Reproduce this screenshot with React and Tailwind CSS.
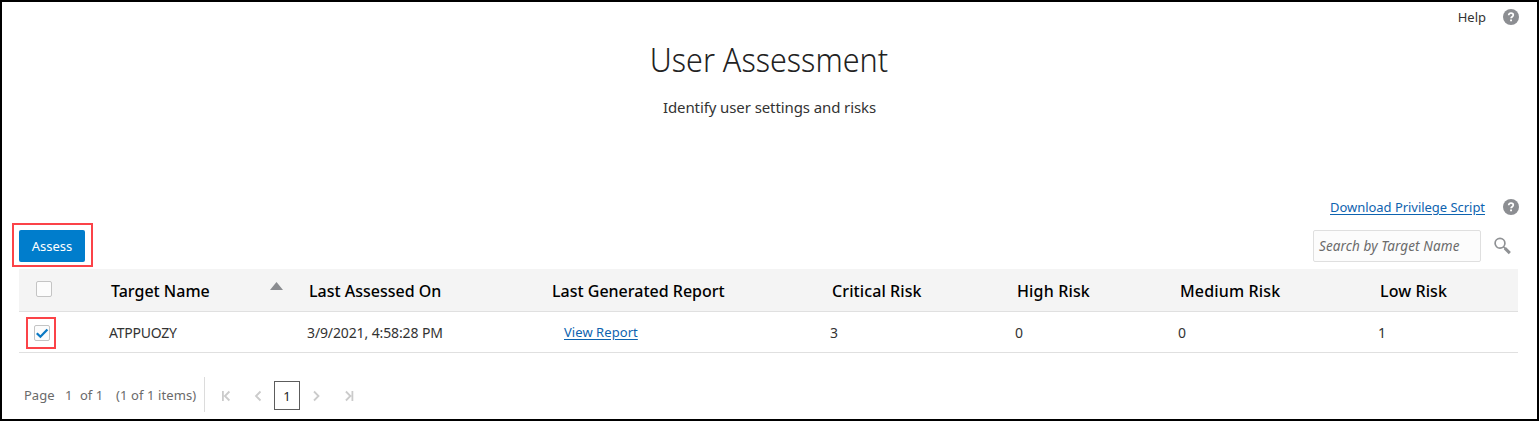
import React from 'react';

const columns = [
  { label: 'Target Name', value: 'ATPPUOZY', head: '', cell: 'text-[14px] tracking-[-0.25px]', sorted: true },
  { label: 'Last Assessed On', value: '3/9/2021, 4:58:28 PM', head: '', cell: 'text-[14px] tracking-[-0.12px]' },
  { label: 'Last Generated Report', value: 'View Report', head: '', cell: 'tracking-[0.06px]', link: true },
  { label: 'Critical Risk', value: '3', head: 'tracking-[0.1px]', cell: 'text-[14px]' },
  { label: 'High Risk', value: '0', head: 'tracking-[0.15px]', cell: 'text-[14px]' },
  { label: 'Medium Risk', value: '0', head: 'tracking-[0.15px]', cell: 'text-[14px]' },
  { label: 'Low Risk', value: '1', head: 'tracking-[0.1px]', cell: 'text-[14px]' },
];

const gridClass = 'grid grid-cols-[90px_198px_243px_280px_185px_163px_200px_140px] items-center';

function HelpIcon() {
  return (
    <svg className="block h-4 w-4 shrink-0" viewBox="0 0 16 16" fill="none">
      <circle cx="8" cy="8" r="8" fill="#8c8e92" />
      <path d="M5.7 6.3C5.7 4.9 6.7 4.2 8 4.2s2.3.7 2.3 1.9c0 1.6-2.2 1.6-2.2 3.2" stroke="#fff" strokeWidth="1.7" />
      <path d="M7.1 10.4h1.9v1.8H7.1z" fill="#fff" />
    </svg>
  );
}

function SearchIcon() {
  return (
    <svg className="block h-[18px] w-[18px] shrink-0" viewBox="0 0 18 18" fill="none" stroke="#8f9194">
      <circle cx="6" cy="6.3" r="4.9" strokeWidth="1.7" />
      <path d="M9.5 9.8l2.2 2.2" strokeWidth="1.6" />
      <path d="M10.8 11.1l5 5" strokeWidth="3" />
    </svg>
  );
}

function Checkbox({ checked }) {
  return (
    <span className="flex h-4 w-4 items-center justify-center rounded-[2px] border border-[#c4c4c4] bg-[#fcfcfc]">
      {checked && (
        <svg className="block h-[14px] w-[14px] shrink-0" viewBox="0 0 14 14" fill="none">
          <path d="M1.8 7.2l3.6 3.5 7-7.2" stroke="#0b79c4" strokeWidth="2.3" />
        </svg>
      )}
    </span>
  );
}

function PageArrow({ d }) {
  return (
    <svg className="block h-3 w-3 shrink-0" viewBox="0 0 12 12" fill="none" stroke="#cbcbcb" strokeWidth="1.8">
      <path d={d} />
    </svg>
  );
}

export default function App() {
  return (
    <div className="flex h-[421px] w-[1539px] flex-col border-2 border-black bg-white font-['Noto_Sans','Open_Sans',sans-serif] text-[13px] leading-5 text-[#333]">
      <div className="flex h-[30px] items-center justify-end gap-[17px] pr-[18px]">
        <span>Help</span>
        <HelpIcon />
      </div>
      <header className="flex flex-col items-center">
        <h1 className="mt-[5px] mr-px scale-x-[0.91] text-[33.5px] font-light leading-[44px] text-[#222]">User Assessment</h1>
        <p className="mt-[14px] text-[15px] leading-6 tracking-[-0.1px]">Identify user settings and risks</p>
      </header>
      <div className="mt-[76px] flex h-[24px] items-center justify-end gap-[18px] pr-[18px]">
        <a className="tracking-[-0.04px] text-[#0e63af] underline underline-offset-2">Download Privilege Script</a>
        <HelpIcon />
      </div>
      <div className="mt-[2px] flex h-[48px] items-start justify-between pl-[10px] pr-[25px]">
        <div className="mt-[2px] flex h-[44px] w-[81px] border-2 border-[#fb4348] pl-[5px] pt-[5px]">
          <button className="h-8 w-[66px] rounded-[2px] bg-[#007dcc] pb-px text-white">Assess</button>
        </div>
        <div className="mt-[9px] flex items-center gap-[13px]">
          <div className="flex h-8 w-[168px] items-center whitespace-nowrap rounded-[2px] border border-[#dfdfdf] bg-[#fcfcfc] pl-[5px] text-[13.5px] italic tracking-[0.12px] text-[#6b6b6b]">
            Search by Target Name
          </div>
          <SearchIcon />
        </div>
      </div>
      <div className="ml-[17px] w-[1499px]">
        <div className={`${gridClass} h-[43px] border-b border-[#e0e0e0] bg-[#f4f4f4]`}>
          <div className="pb-[2px] pl-[17px]"><Checkbox /></div>
          {columns.map((c) => (
            <div key={c.label} className="flex justify-between pl-[2px]">
              <span className={`whitespace-nowrap pt-px text-[16px] font-medium text-black ${c.head}`}>{c.label}</span>
              {c.sorted && (
                <svg className="mr-[24px] mt-[2px] block h-2 w-[13px]" viewBox="0 0 13 8"><path d="M6.5 0L13 8H0z" fill="#8a8c90" /></svg>
              )}
            </div>
          ))}
        </div>
        <div className={`${gridClass} h-[41px] border-b border-[#e0e0e0]`}>
          <div className="ml-[7px] mt-px flex h-8 w-[30px] items-center border-2 border-[#fb4348] pl-[6px]">
            <Checkbox checked />
          </div>
          {columns.map((c) => (
            <div key={c.label} className={c.link ? 'pl-[14px]' : 'pt-px'}>
              <span className={c.link ? `text-[#0e63af] underline underline-offset-2 ${c.cell}` : c.cell}>{c.value}</span>
            </div>
          ))}
        </div>
        <div className="mt-[24px] flex h-[35px] items-center">
          <div className="flex h-[35px] w-[186px] items-center whitespace-pre border-r border-[#dcdcdc] pl-[5px] text-[#6a6a6a]">
            <span className="w-[41px]">Page</span>
            <span className="w-[15px]">1</span>
            <span className="w-[36px]">of 1</span>
            <span className="tracking-[0.1px]">(1 of 1 items)</span>
          </div>
          <div className="ml-[15px] mt-[2px] flex items-center">
            <PageArrow d="M2.9 1v10M9.4 1.5L4.9 6l4.5 4.5" />
            <span className="ml-[20px]"><PageArrow d="M8.5 1.5L4 6l4.5 4.5" /></span>
            <span className="ml-[10px] mr-[10px] flex h-[29px] w-[26px] items-center justify-center border border-[#5c5c5c] text-[#222]">1</span>
            <PageArrow d="M4 1.5L8.5 6 4 10.5" />
            <span className="ml-[21px]"><PageArrow d="M9.4 1v10M2.9 1.5L7.4 6l-4.5 4.5" /></span>
          </div>
        </div>
      </div>
    </div>
  );
}
